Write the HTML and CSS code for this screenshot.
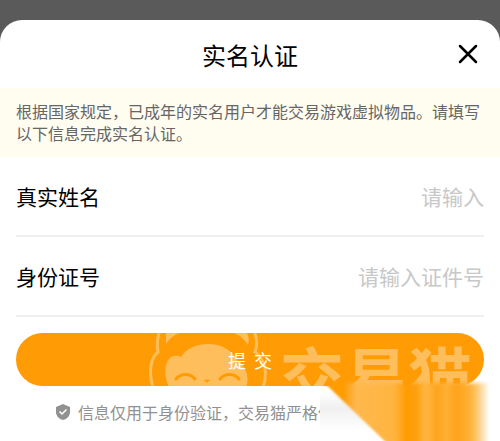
FILE: index.html
```html
<!DOCTYPE html>
<html lang="zh-CN">
<head>
<meta charset="utf-8">
<meta name="viewport" content="width=device-width, initial-scale=1">
<title>实名认证</title>
<link rel="stylesheet" href="styles.css">
</head>
<body>
<main class="sheet">
  <header class="header">
    <h1 class="title">实名认证</h1>
    <button class="close" type="button" aria-label="关闭">
      <svg viewBox="0 0 20 20" width="20" height="20" aria-hidden="true"><path d="M2 2 18 18M18 2 2 18" fill="none" stroke="#000" stroke-width="2.5" stroke-linecap="round"/></svg>
    </button>
  </header>
  <p class="notice">根据国家规定，已成年的实名用户才能交易游戏虚拟物品。请填写以下信息完成实名认证。</p>
  <form class="form">
    <div class="field">
      <label for="name">真实姓名</label>
      <input id="name" type="text" placeholder="请输入">
    </div>
    <div class="field">
      <label for="idno">身份证号</label>
      <input id="idno" type="text" placeholder="请输入证件号">
    </div>
    <div class="action">
      <button class="submit" type="submit">
        <span class="brand" aria-hidden="true">
          <svg class="cat" viewBox="0 0 120 54" width="120" height="54">
            <path d="M11 0C9 7 9 14 10 19C3 25 0 38 5 54M107 0C109 7 109 14 107 19C117 27 120 40 115 54" fill="none" stroke="#ffbe5c" stroke-width="3"/>
            <path d="M18 0H32C26 2 21 6 18 11ZM86 0H99C101 4 101 8 100 12C97 7 92 2 86 0Z" fill="#ffbe5c"/>
            <path d="M21 54C16 44 16 32 21 26C24 22 29 22 33 24C38 16 48 11 60 11C75 11 84 18 90 28C98 34 102 45 98 54Z" fill="#ffbe5c"/>
            <path d="M28 46C33 40 42 40 47 46M72 46C77 40 86 40 91 46" fill="none" stroke="#ff9c05" stroke-width="3" stroke-linecap="round"/>
            <path d="M56 47Q59 46 62 47L59 50Z" fill="#ff9c05"/>
          </svg>
          <span class="brand-name">交易猫</span>
        </span>
        <span class="submit-label">提&nbsp; 交</span>
      </button>
    </div>
  </form>
  <footer class="footer">
    <svg viewBox="0 0 14 16" width="14" height="16" aria-hidden="true"><path d="M7 0 14 3V8C14 12 11 15 7 16C3 15 0 12 0 8V3Z" fill="#919191"/><path d="M3.5 7.5 6 10 10.5 5.5" fill="none" stroke="#fff" stroke-width="1.5"/></svg>
    <span class="privacy">信息仅用于身份验证，交易猫严格保</span>
    <svg class="smear" viewBox="0 0 180 60" preserveAspectRatio="none" aria-hidden="true">
      <defs>
        <linearGradient id="bands" gradientUnits="userSpaceOnUse" x1="0" x2="180">
          <stop offset=".13" stop-color="#ff9c05"/><stop offset=".2" stop-color="#ffb84c"/><stop offset=".41" stop-color="#ffb540"/><stop offset=".48" stop-color="#ff9c05"/><stop offset=".53" stop-color="#ff9f0c"/><stop offset=".59" stop-color="#ffb745"/><stop offset=".65" stop-color="#ffa51c"/><stop offset=".7" stop-color="#ffb036"/><stop offset=".76" stop-color="#ffa31a"/><stop offset=".83" stop-color="#ffb036"/><stop offset=".87" stop-color="#ffc668"/><stop offset=".94" stop-color="#fff"/>
        </linearGradient>
        <linearGradient id="haze" x2="0" y2="1"><stop offset=".1" stop-color="#fff"/><stop offset=".4" stop-color="#f0f0f0"/><stop offset=".8" stop-color="#fff"/></linearGradient>
        <linearGradient id="reveal" gradientUnits="userSpaceOnUse" x1="0" x2="0" y1="0" y2="6"><stop offset="0" stop-color="#000"/><stop offset="1" stop-color="#fff"/></linearGradient>
        <mask id="fade" maskUnits="userSpaceOnUse" x="0" y="0" width="180" height="60"><path d="M0 0H180V60H0Z" fill="url(#reveal)"/></mask>
        <filter id="soft"><feGaussianBlur stdDeviation="1"/></filter>
      </defs>
      <path d="M0 6H12L71 60H0Z" fill="url(#haze)"/>
      <g mask="url(#fade)"><path d="M-5 -6H158L182 14V66H71Z" fill="url(#bands)" filter="url(#soft)"/></g>
    </svg>
  </footer>
</main>
</body>
</html>
```
FILE: styles.css
```css
* { box-sizing: border-box; }
body {
  margin: 0;
  padding-top: 20px;
  min-height: 100vh;
  display: flex;
  background: #5a5a5b;
  font-family: "Noto Sans CJK SC", sans-serif;
  color: #000;
}
.sheet {
  flex: 1;
  min-width: 0;
  background: #fff;
  border-radius: 22px 22px 0 0;
  overflow: hidden;
}
.header {
  display: grid;
  grid-template-columns: 32px 1fr 32px;
  align-items: center;
  height: 68px;
  padding: 0 16px;
}
.title {
  grid-column: 2;
  margin: 0;
  font-size: 24px;
  font-weight: 400;
  text-align: center;
}
.close {
  display: grid;
  place-items: center;
  height: 32px;
  padding: 0;
  border: 0;
  background: none;
}
.notice {
  margin: 0;
  padding: 12px 16px 13px;
  background: #fffcf0;
  color: #666;
  font-size: 16px;
  line-height: 22px;
}
.field {
  display: flex;
  align-items: center;
  height: 80px;
  margin: 0 16px;
  border-bottom: 2px solid #f0f0f0;
  font-size: 21px;
}
.field input {
  flex: 1;
  min-width: 0;
  padding: 0;
  border: 0;
  outline: 0;
  background: none;
  font: inherit;
  text-align: right;
}
.field input::placeholder { color: #c8c8c8; }
.action { padding: 16px 16px 0; }
.submit {
  position: relative;
  display: block;
  width: 100%;
  height: 53px;
  padding: 0;
  border: 0;
  border-radius: 27px;
  overflow: hidden;
  background: #ff9c05;
  color: #fff;
  font: 18px "Noto Sans CJK SC", sans-serif;
}
.submit-label { position: relative; }
.brand {
  position: absolute;
  inset: 0;
  display: flex;
  justify-content: flex-end;
  gap: 12px;
  padding-right: 12px;
}
.brand-name {
  color: #ffbe5c;
  font-size: 64px;
  font-weight: 700;
  line-height: 80px;
}
.footer {
  position: relative;
  display: flex;
  align-items: center;
  gap: 8px;
  height: 55px;
  padding: 0 0 4px 56px;
  color: #919191;
  font-size: 16px;
  white-space: nowrap;
}
.smear {
  position: absolute;
  top: -6px;
  right: 0;
  width: 36%;
  height: 61px;
}
```
